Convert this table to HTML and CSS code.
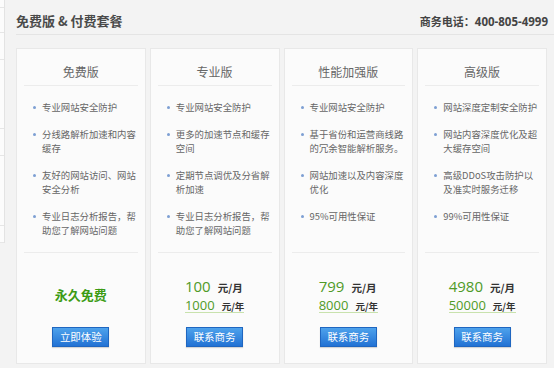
FILE: index.html
```html
<!DOCTYPE html>
<html lang="zh-CN">
<head>
<meta charset="utf-8">
<title>免费版 & 付费套餐</title>
<link rel="stylesheet" href="styles.css">
</head>
<body>
<div class="page">
  <aside class="side">
    <div class="s s1"></div><div class="s s2"></div><div class="s s3"></div><div class="s s4"></div><div class="s s5"></div><div class="s s6"></div><div class="s s7"></div>
  </aside>
  <main class="main">
    <header class="head">
      <h1 class="title">免费版 &amp; 付费套餐</h1>
      <div class="phone">商务电话：<span class="tel">400-805-4999</span></div>
    </header>
    <section class="plans">
      <div class="card">
        <h2 class="name">免费版</h2>
        <ul class="feats">
          <li>专业网站安全防护</li>
          <li>分线路解析加速和内容缓存</li>
          <li>友好的网站访问、网站安全分析</li>
          <li>专业日志分析报告，帮助您了解网站问题</li>
        </ul>
        <div class="foot">
          <div class="free">永久免费</div>
          <a class="btn">立即体验</a>
        </div>
      </div>
      <div class="card">
        <h2 class="name">专业版</h2>
        <ul class="feats">
          <li>专业网站安全防护</li>
          <li>更多的加速节点和缓存空间</li>
          <li>定期节点调优及分省解析加速</li>
          <li>专业日志分析报告，帮助您了解网站问题</li>
        </ul>
        <div class="foot">
          <div class="price">
            <div class="pl"><span class="num">100</span><span class="unit">元/月</span></div>
            <div class="pl yr"><span class="num">1000</span><span class="unit">元/年</span></div>
          </div>
          <a class="btn">联系商务</a>
        </div>
      </div>
      <div class="card">
        <h2 class="name">性能加强版</h2>
        <ul class="feats">
          <li>专业网站安全防护</li>
          <li>基于省份和运营商线路的冗余智能解析服务。</li>
          <li>网站加速以及内容深度优化</li>
          <li>95%可用性保证</li>
        </ul>
        <div class="foot">
          <div class="price">
            <div class="pl"><span class="num">799</span><span class="unit">元/月</span></div>
            <div class="pl yr"><span class="num">8000</span><span class="unit">元/年</span></div>
          </div>
          <a class="btn">联系商务</a>
        </div>
      </div>
      <div class="card">
        <h2 class="name">高级版</h2>
        <ul class="feats">
          <li>网站深度定制安全防护</li>
          <li>网站内容深度优化及超大缓存空间</li>
          <li>高级DDoS攻击防护以及准实时服务迁移</li>
          <li>99%可用性保证</li>
        </ul>
        <div class="foot">
          <div class="price">
            <div class="pl"><span class="num">4980</span><span class="unit">元/月</span></div>
            <div class="pl yr"><span class="num">50000</span><span class="unit">元/年</span></div>
          </div>
          <a class="btn">联系商务</a>
        </div>
      </div>
    </section>
  </main>
</div>
</body>
</html>
```
FILE: styles.css
```css
* { box-sizing: border-box; }
html, body { margin: 0; padding: 0; }
body {
  background: #f3f3f3;
  font-family: "Noto Sans CJK SC", "Noto Sans", sans-serif;
  color: #555;
  width: 554px;
  height: 368px;
  overflow: hidden;
}
.page { display: flex; align-items: flex-start; }

.side {
  width: 5px;
  flex: none;
  background: #fcfcfc;
  border-right: 1px solid #e3e3e3;
  display: flex;
  flex-direction: column;
}
.s { border-bottom: 1px solid #e6e6e6; }
.s1 { height: 8px; }
.s2 { height: 25px; }
.s3 { height: 27px; }
.s4 { height: 69px; }
.s5 { height: 27px; }
.s6 { height: 70px; }
.s7 { height: 17px; }

.main { flex: 1; padding-left: 11px; }

.head {
  height: 35px;
  padding: 8px 6px 0 0;
  border-bottom: 1px solid #e4e4e4;
  display: flex;
  justify-content: space-between;
  align-items: flex-start;
}
.title {
  margin: 0;
  font-size: 13px;
  line-height: 26px;
  font-weight: bold;
  color: #4a4a4a;
}
.phone {
  font-size: 11px;
  line-height: 26px;
  font-weight: bold;
  color: #444;
}
.tel { font-family: "Open Sans", "Noto Sans", sans-serif; font-size: 11.5px; }

.plans {
  margin: 13px 7px 0 0;
  display: grid;
  grid-template-columns: repeat(4, 1fr);
  gap: 4px;
}
.card {
  background: #fbfbfb;
  border: 1px solid #e8e8e8;
  padding: 0 7px 16px;
  display: flex;
  flex-direction: column;
}
.name {
  margin: 0;
  padding: 16px 0 6px;
  border-bottom: 1px solid #ececec;
  text-align: center;
  font-size: 12px;
  line-height: 14px;
  font-weight: normal;
  color: #666;
}
.feats {
  list-style: none;
  margin: 0;
  padding: 14px 0 0 18px;
  height: 166px;
  font-size: 9.4px;
  line-height: 14px;
  color: #666;
}
.feats li { position: relative; margin-bottom: 13px; }
.feats li::before {
  content: "";
  position: absolute;
  left: -9px;
  top: 6px;
  width: 3px;
  height: 3px;
  border-radius: 50%;
  background: #7d9fd3;
}
.foot {
  border-top: 1px solid #ececec;
  padding-top: 23px;
  display: flex;
  flex-direction: column;
  align-items: center;
}
.free {
  height: 37px;
  line-height: 37px;
  font-size: 13px;
  font-weight: bold;
  color: #3c9b14;
}
.price { border-bottom: 1px solid #c8e2ad; }
.pl { height: 18px; line-height: 18px; white-space: nowrap; }
.num {
  font-family: "Open Sans", "Noto Sans", sans-serif;
  font-size: 15px;
  color: #4f9a27;
  margin-right: 7px;
}
.unit { font-size: 10.5px; font-weight: bold; color: #333; }
.yr .num { font-size: 13px; }
.yr .unit { font-size: 9.5px; }
.btn {
  margin-top: 14px;
  width: 57px;
  height: 20px;
  line-height: 18px;
  text-align: center;
  font-size: 10.5px;
  color: #fff;
  background: linear-gradient(#4ea2ec, #2272d4);
  border: 1px solid #1f66c0;
  box-shadow: 0 1px 1px rgba(0,0,0,0.15);
}
```
